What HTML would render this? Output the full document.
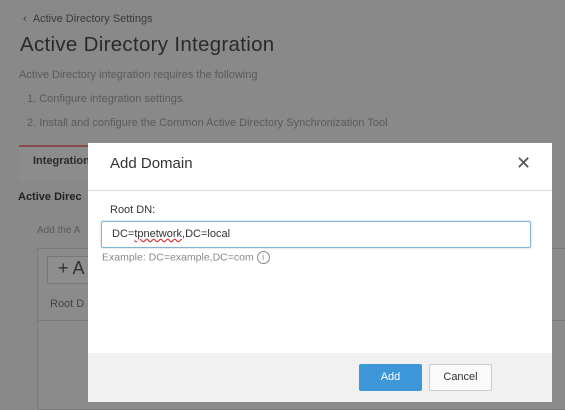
<!DOCTYPE html><html><head><style>
body{margin:0;width:565px;height:402px;overflow:hidden;background:#898989;font-family:"Liberation Sans",sans-serif;position:relative}
.a{position:absolute;white-space:nowrap}
</style></head><body>
<div class="a" style="left:23px;top:13px;font-size:11px;color:#3a3a3a">‹&nbsp;&nbsp;Active Directory Settings</div>
<div class="a" style="left:20px;top:33px;font-size:20.5px;color:#2a2a2a;letter-spacing:0.3px">Active Directory Integration</div>
<div class="a" style="left:19px;top:69px;font-size:11px;color:#5a5a5a">Active Directory integration requires the following</div>
<div class="a" style="left:27px;top:93px;font-size:11px;color:#5a5a5a">1. Configure integration settings.</div>
<div class="a" style="left:27px;top:117px;font-size:11px;color:#5a5a5a">2. Install and configure the Common Active Directory Synchronization Tool</div>
<div class="a" style="left:19px;top:145px;width:80px;height:34px;border-top:2px solid #8a4a4a;background:#8c8c8c"></div>
<div class="a" style="left:33px;top:155px;font-size:11px;font-weight:bold;color:#2a2a2a">Integration</div>
<div class="a" style="left:18px;top:191px;font-size:11px;font-weight:bold;color:#222">Active Direc</div>
<div class="a" style="left:37px;top:225px;font-size:10px;color:#5a5a5a">Add the A</div>
<div class="a" style="left:37px;top:248px;width:540px;height:160px;background:#8b8b8b;border:1px solid #7a7a7a"></div>
<div class="a" style="left:47px;top:256px;width:50px;height:26px;border:1px solid #777;background:#8e8e8e"></div>
<div class="a" style="left:58px;top:258px;font-size:18px;color:#333">+ A</div>
<div class="a" style="left:50px;top:298px;font-size:11px;color:#444">Root D</div>
<div class="a" style="left:37px;top:320px;width:540px;height:1px;background:#7a7a7a"></div>
<div class="a" style="left:88px;top:143px;width:464px;height:259px;background:#fff"></div>
<div class="a" style="left:88px;top:190px;width:464px;height:1px;background:#ddd"></div>
<div class="a" style="left:110px;top:155px;font-size:15px;color:#333">Add Domain</div>
<div class="a" style="left:516px;top:153px;font-size:18px;color:#555">✕</div>
<div class="a" style="left:110px;top:204px;font-size:11px;color:#333">Root DN:</div>
<div class="a" style="left:101px;top:221px;width:428px;height:25px;border:1px solid #7fb3d9;border-radius:2px;box-shadow:0 0 2px #bcd"></div>
<div class="a" style="left:112px;top:228px;font-size:11px;color:#333">DC=<span style="text-decoration:underline wavy #d33">tpnetwork</span>,DC=local</div>
<div class="a" style="left:102px;top:251px;font-size:10.5px;color:#888">Example: DC=example,DC=com <span style="display:inline-block;width:11px;height:11px;border:1px solid #888;border-radius:50%;font-size:9px;text-align:center;line-height:11px;vertical-align:middle">i</span></div>
<div class="a" style="left:88px;top:353px;width:464px;height:49px;background:#f1f1f1"></div>
<div class="a" style="left:359px;top:364px;width:63px;height:27px;background:#3d97d9;border-radius:2px;color:#fff;font-size:11px;text-align:center;line-height:27px">Add</div>
<div class="a" style="left:429px;top:364px;width:61px;height:25px;background:#fafafa;border:1px solid #ccc;border-radius:2px;color:#333;font-size:11px;text-align:center;line-height:25px">Cancel</div>
</body></html>
